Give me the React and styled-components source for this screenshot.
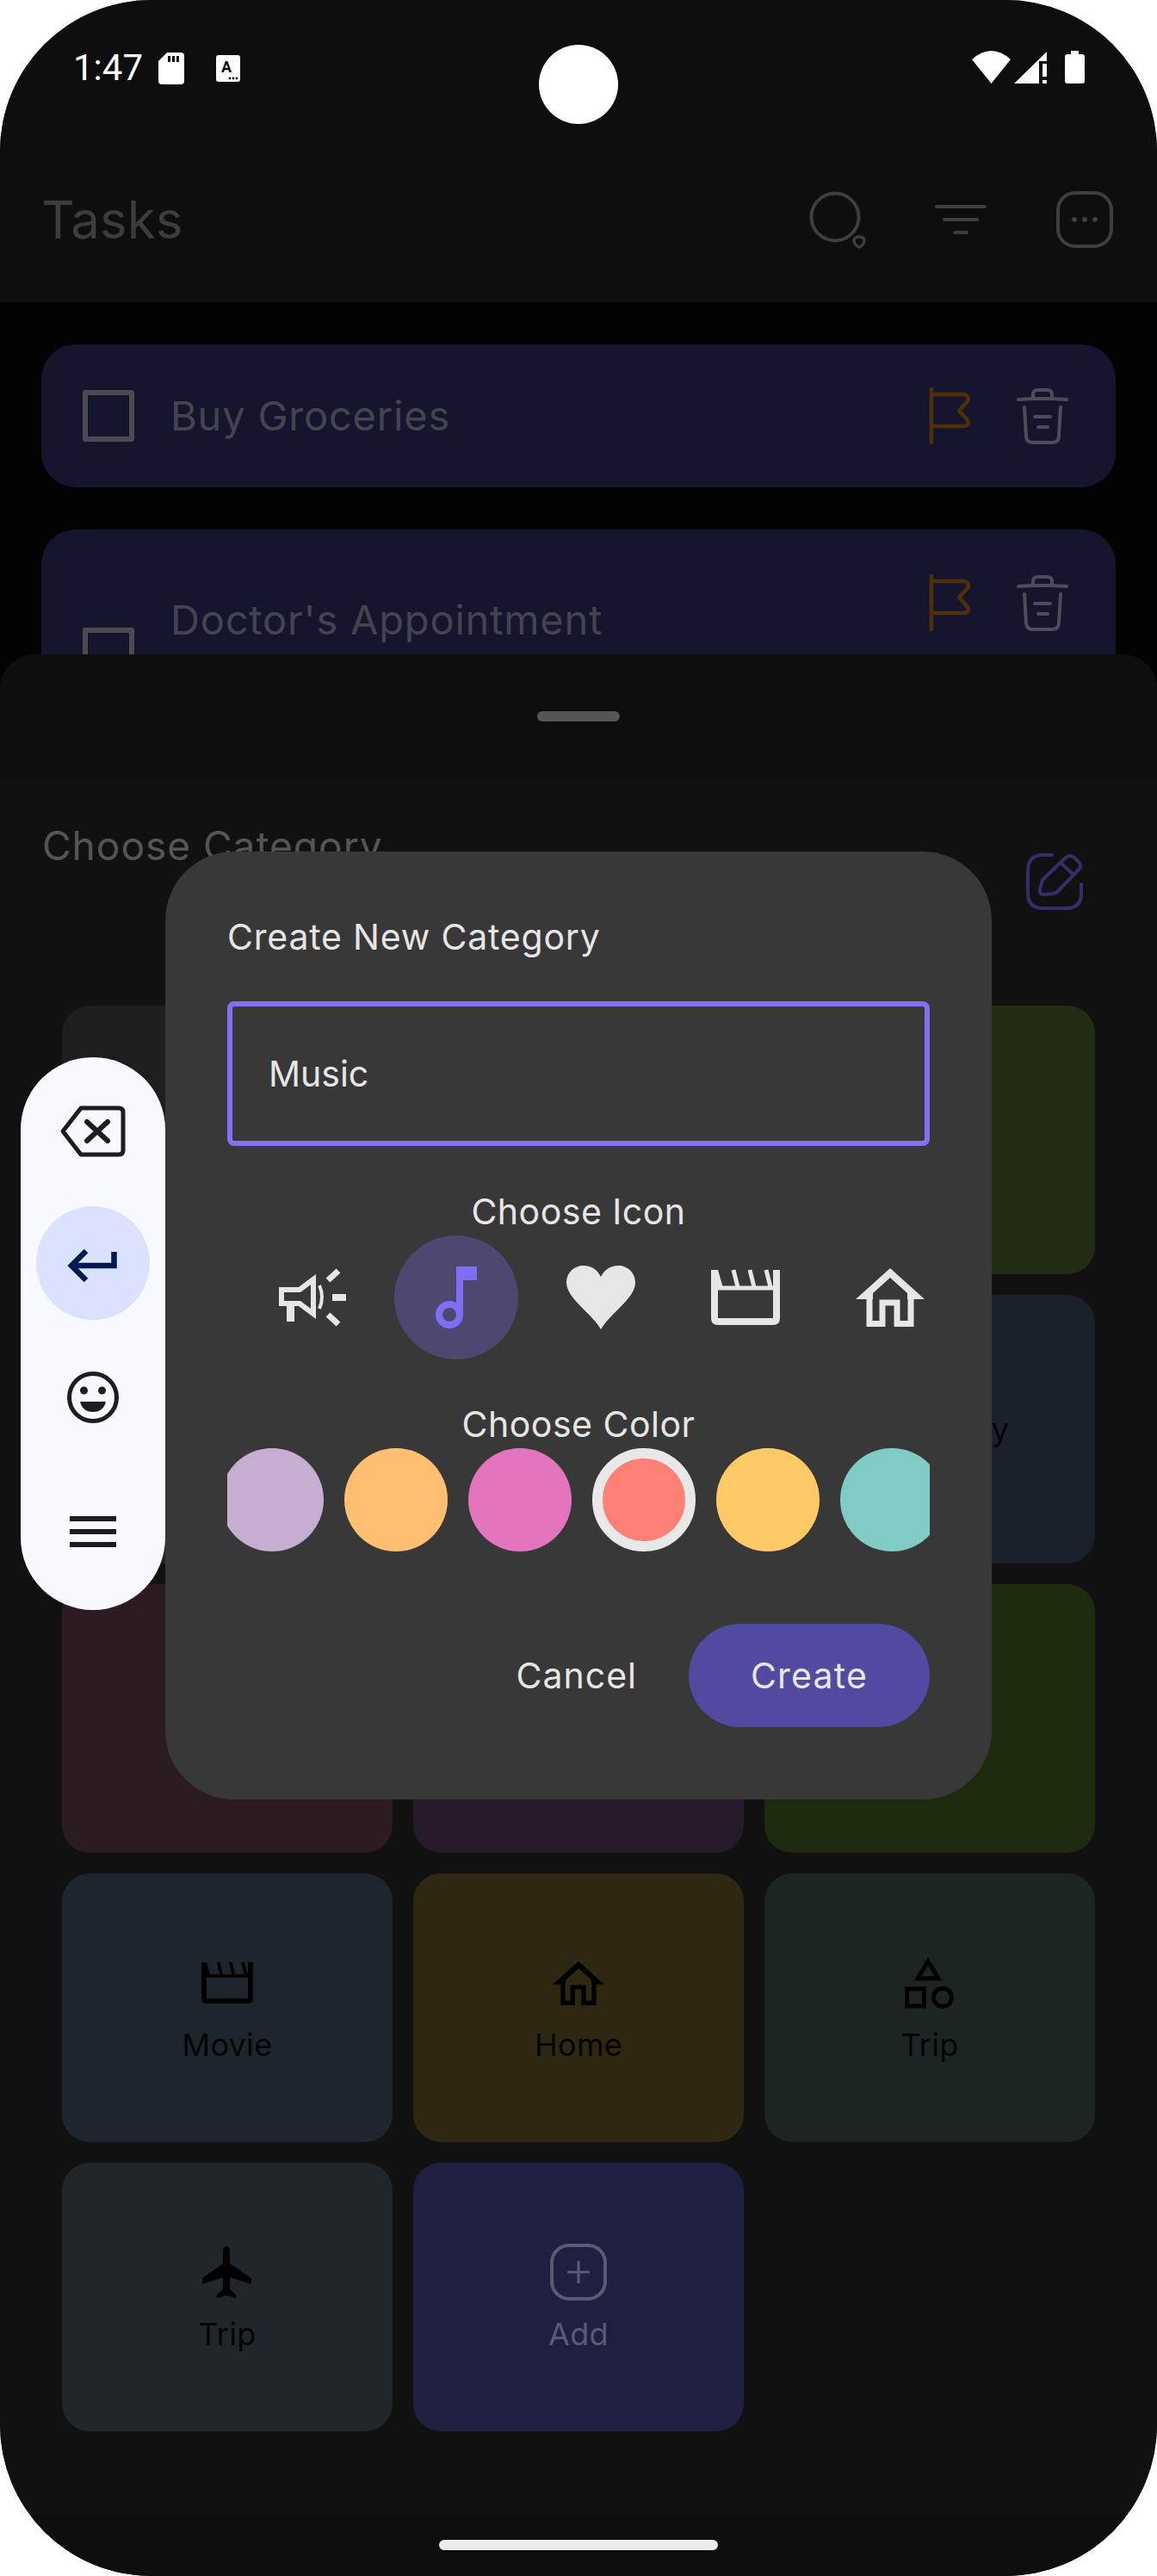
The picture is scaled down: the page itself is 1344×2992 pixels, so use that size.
import styled, { createGlobalStyle } from 'styled-components';

const GlobalStyle = createGlobalStyle`
    html, body {
        margin: 0;
        padding: 0;
        background: #fff;
    }
    * {
        box-sizing: border-box;
    }
`;

const Phone = styled.div`
    position: relative;
    width: 1344px;
    height: 2992px;
    overflow: hidden;
    border-radius: 176px;
    background: #030303;
    font-family: Inter, "Noto Sans", sans-serif;
`;

const Glyph = styled.svg`
    display: block;
    flex: none;
    overflow: visible;
`;

const Camera = styled.div`
    position: absolute;
    top: 52px;
    left: 626px;
    width: 92px;
    height: 92px;
    border-radius: 50%;
    background: #fff;
`;

const TopBar = styled.header`
    height: 351px;
    background: #0e0e0e;
`;

const StatusBar = styled.div`
    display: flex;
    justify-content: space-between;
    height: 160px;
    padding: 59px 84px 0 85px;
`;

const StatusGroup = styled.div`
    display: flex;
    align-items: flex-start;
    gap: ${(p) => p.$gap}px;
`;

const Clock = styled.span`
    margin-top: -1px;
    width: 79px;
    font-family: Roboto, sans-serif;
    font-size: 42px;
    line-height: 42px;
    color: #fff;
`;

const TitleRow = styled.div`
    display: flex;
    align-items: center;
    height: 66px;
    margin-top: 62px;
    padding: 0 51px 0 48px;
`;

const AppTitle = styled.h1`
    flex: 1;
    margin: 0;
    font-size: 60px;
    font-weight: 400;
    color: #3c3c3c;
`;

const HeaderActions = styled.div`
    display: flex;
    gap: 78px;
`;

const TaskList = styled.div`
    display: flex;
    flex-direction: column;
    gap: 49px;
    padding: 49px 48px 0;
`;

const TaskCard = styled.div`
    display: flex;
    align-items: ${(p) => (p.$tall ? 'flex-start' : 'center')};
    min-height: ${(p) => (p.$tall ? 288 : 166)}px;
    padding: ${(p) => (p.$tall ? '52px' : '0')} 54px 0 48px;
    border-radius: 40px;
    background: #16152e;
`;

const Checkbox = styled.div`
    flex: none;
    width: 60px;
    height: 60px;
    margin-right: 42px;
    border: 6px solid #4a4a50;
    border-radius: 3px;
    align-self: ${(p) => (p.$tall ? 'flex-start' : 'center')};
    margin-top: ${(p) => (p.$tall ? 62 : 0)}px;
`;

const TaskName = styled.span`
    flex: 1;
    margin-top: ${(p) => (p.$tall ? 25 : 0)}px;
    font-size: 47px;
    line-height: 56px;
    letter-spacing: 0.8px;
    color: #44444f;
`;

const TaskActions = styled.div`
    display: flex;
    align-items: center;
    gap: 52px;
`;

const Sheet = styled.section`
    position: absolute;
    top: 760px;
    left: 0;
    right: 0;
    bottom: 0;
    display: flex;
    flex-direction: column;
    overflow: hidden;
    border-radius: 40px 40px 0 0;
    background: #111;
`;

const SheetHandleBar = styled.div`
    display: flex;
    justify-content: center;
    flex: none;
    height: 144px;
    padding-top: 66px;
    background: #0e0e0e;
`;

const SheetHandle = styled.div`
    width: 96px;
    height: 12px;
    border-radius: 6px;
    background: #555;
`;

const SheetBody = styled.div`
    flex: 1;
    padding: 0 72px;
`;

const SheetTitleRow = styled.div`
    display: flex;
    justify-content: space-between;
    height: 264px;
    margin: 0 14px 0 -23px;
`;

const SheetTitle = styled.h2`
    margin: 50px 0 0;
    font-size: 46px;
    line-height: 56px;
    font-weight: 400;
    letter-spacing: 1px;
    color: #555;
`;

const EditSlot = styled.div`
    margin-top: 87px;
`;

const CategoryGrid = styled.div`
    display: grid;
    grid-template-columns: repeat(3, 384px);
    grid-auto-rows: 312px;
    gap: 24px;
`;

const CategoryCard = styled.div`
    display: flex;
    flex-direction: column;
    align-items: center;
    justify-content: center;
    gap: 20px;
    border-radius: 32px;
    background: ${(p) => p.$bg};
`;

const CategoryIcon = styled.div`
    display: flex;
    align-items: center;
    justify-content: center;
    height: 66px;
    color: #000;
`;

const CategoryLabel = styled.span`
    font-size: 36px;
    line-height: 38px;
    letter-spacing: ${(p) => (p.$wide ? 1.6 : 0.3)}px;
    color: ${(p) => p.$color || '#050505'};
`;

const NavBand = styled.div`
    flex: none;
    height: 72px;
    background: #0e0e0e;
`;

const HomeIndicator = styled.div`
    position: absolute;
    left: 510px;
    bottom: 30px;
    width: 324px;
    height: 12px;
    border-radius: 6px;
    background: #ececec;
`;

const Dialog = styled.div`
    position: absolute;
    top: 989px;
    left: 192px;
    display: flex;
    flex-direction: column;
    width: 960px;
    height: 1101px;
    padding: 74px 72px 0;
    border-radius: 80px;
    background: #383838;
    color: #e6e6e6;
`;

const DialogTitle = styled.h3`
    margin: 0;
    font-size: 41px;
    line-height: 50px;
    font-weight: 400;
    letter-spacing: 0.8px;
`;

const NameField = styled.div`
    display: flex;
    align-items: center;
    height: 168px;
    margin-top: 50px;
    padding-left: 42px;
    border: 6px solid #8470f5;
    border-radius: 8px;
    font-size: 41px;
`;

const SectionLabel = styled.div`
    margin-top: ${(p) => p.$top}px;
    font-size: 41px;
    line-height: 50px;
    letter-spacing: 0.5px;
    text-align: center;
`;

const IconStrip = styled.div`
    display: flex;
    gap: 24px;
    margin-top: 3px;
    padding-left: 26px;
    overflow: hidden;
`;

const IconChoice = styled.div`
    display: flex;
    align-items: center;
    justify-content: center;
    flex: none;
    width: 144px;
    height: 144px;
    border-radius: 50%;
    background: ${(p) => (p.$selected ? '#4e4770' : 'transparent')};
    color: #e6e6e6;
`;

const SwatchStrip = styled.div`
    display: flex;
    gap: 24px;
    margin-top: 3px;
    overflow: hidden;
`;

const Swatch = styled.div`
    flex: none;
    width: 120px;
    height: 120px;
    border-radius: 50%;
    background: ${(p) => p.$color};
    border: ${(p) => (p.$selected ? '12px solid #e8e8e8' : 'none')};
    margin-left: ${(p) => (p.$first ? -8 : 0)}px;
`;

const DialogButtons = styled.div`
    display: flex;
    justify-content: flex-end;
    align-items: center;
    gap: 60px;
    margin-top: 84px;
`;

const CancelButton = styled.span`
    font-size: 41px;
    letter-spacing: 1px;
`;

const CreateButton = styled.div`
    display: flex;
    align-items: center;
    justify-content: center;
    width: 280px;
    height: 120px;
    border-radius: 60px;
    background: #514aa0;
    font-size: 41px;
    letter-spacing: 1.2px;
`;

const KeyboardToolbar = styled.div`
    position: absolute;
    top: 1228px;
    left: 24px;
    display: flex;
    flex-direction: column;
    align-items: center;
    width: 168px;
    height: 642px;
    padding-top: 8px;
    border-radius: 84px;
    background: #f8f8ff;
`;

const ToolbarKey = styled.div`
    display: flex;
    align-items: center;
    justify-content: center;
    flex: none;
    width: 132px;
    height: ${(p) => (p.$active ? 132 : 156)}px;
    margin: ${(p) => (p.$active ? '9px 0 12px' : '0')};
    border-radius: 50%;
    background: ${(p) => (p.$active ? '#dbe2ff' : 'transparent')};
`;

const SdIcon = () => (
    <Glyph width="30" height="37" viewBox="0 0 30 37" style={{ marginTop: 2 }}>
        <path d="M10 0H26Q30 0 30 4V33Q30 37 26 37H4Q0 37 0 33V10Z" fill="#fff" />
        <path d="M11 4h3v7h-3zM16 4h3v7h-3zM21 4h3v7h-3z" fill="#0e0e0e" />
    </Glyph>
);

const KeyboardBadge = () => (
    <Glyph width="28" height="31" viewBox="0 0 28 31" style={{ marginTop: 5, marginLeft: 17 }}>
        <rect width="28" height="31" rx="3" fill="#fff" />
        <text x="12" y="20" fontSize="18" fontWeight="700" textAnchor="middle" fontFamily="Roboto, sans-serif" fill="#0e0e0e">A</text>
        <circle cx="16" cy="27" r="1.4" fill="#0e0e0e" />
        <circle cx="20" cy="27" r="1.4" fill="#0e0e0e" />
        <circle cx="24" cy="27" r="1.4" fill="#0e0e0e" />
    </Glyph>
);

const WifiIcon = () => (
    <Glyph width="45" height="38" viewBox="0 0 45 38">
        <path d="M0 10Q22.500 -10 45 10L22.500 38Z" fill="#fff" />
    </Glyph>
);

const SignalIcon = () => (
    <Glyph width="38" height="37" viewBox="0 0 38 37" style={{ marginTop: 1 }}>
        <path d="M38 0V11H29V37H0Z" fill="#fff" />
        <path d="M33 14h5v15h-5zM33 33h5v4h-5z" fill="#fff" />
    </Glyph>
);

const BatteryIcon = () => (
    <Glyph width="23" height="38" viewBox="0 0 23 38" style={{ marginLeft: 17 }}>
        <path d="M7 0H16V4H20Q23 4 23 7V35Q23 38 20 38H3Q0 38 0 35V7Q0 4 3 4H7Z" fill="#fff" />
    </Glyph>
);

const SearchIcon = () => (
    <Glyph width="66" height="66" viewBox="0 0 66 66" fill="none" stroke="#3e3e3e" strokeWidth="4">
        <circle cx="31" cy="30" r="27.500" />
        <path d="M59 53Q65 53 65 58Q64 63 59 65Q54 63 53 58Q53 53 59 53Z" strokeWidth="3.500" />
    </Glyph>
);

const FilterIcon = () => (
    <Glyph width="66" height="66" viewBox="0 0 66 66" fill="none" stroke="#3e3e3e" strokeWidth="4" strokeLinecap="round">
        <path d="M5 18H61M14 33H52M26 48H40" />
    </Glyph>
);

const MoreIcon = () => (
    <Glyph width="66" height="66" viewBox="0 0 66 66" fill="none" stroke="#3e3e3e" strokeWidth="4">
        <rect x="2" y="2" width="62" height="62" rx="20" />
        <circle cx="21" cy="33" r="3" fill="#3e3e3e" stroke="none" />
        <circle cx="33" cy="33" r="3" fill="#3e3e3e" stroke="none" />
        <circle cx="45" cy="33" r="3" fill="#3e3e3e" stroke="none" />
    </Glyph>
);

const FlagIcon = () => (
    <Glyph width="48" height="66" viewBox="0 0 48 66" fill="none" stroke="#4f2f0a" strokeWidth="4.500" strokeLinecap="round" strokeLinejoin="round">
        <path d="M2 2V64" />
        <path d="M2 8H38C44 8 46 12 44 16L34 27L44 38C46 42 44 45 39 45H2" />
    </Glyph>
);

const TrashIcon = () => (
    <Glyph width="62" height="66" viewBox="0 0 62 66" fill="none" stroke="#4d4c58" strokeWidth="4" strokeLinecap="round">
        <path d="M3 14Q31 12 59 14" />
        <path d="M20 13V8Q20 3 26 3H36Q42 3 42 8V13" />
        <path d="M10 23L12 56Q12 64 20 64H42Q50 64 50 56L52 23" />
        <path d="M22 34H40M26 46H37" />
    </Glyph>
);

const EditIcon = () => (
    <Glyph width="66" height="66" viewBox="0 0 66 66" fill="none" stroke="#372d6b" strokeWidth="4" strokeLinecap="round" strokeLinejoin="round">
        <path d="M30 2H20Q2 2 2 20V46Q2 64 20 64H46Q64 64 64 46V36" />
        <path d="M19 31L46 5Q51 1 56 5L61 10Q65 15 61 19L37 44Q35 46 31 47L21 48Q15 48 16 42Z" />
        <path d="M41 12L54 24" />
    </Glyph>
);

const MegaphoneIcon = () => (
    <Glyph width="80" height="64" viewBox="0 0 80 64" fill="none" stroke="currentColor">
        <path d="M42 11L26 23H5V39H26L42 51Z" strokeWidth="6" />
        <path d="M11 42H20V60H11Z" fill="currentColor" stroke="none" />
        <path d="M49 18Q55 31 49 45" strokeWidth="4" />
        <path d="M64 28H80V36H64Z" fill="currentColor" stroke="none" />
        <path d="M59 12L71 1M59 52L71 63" strokeWidth="7" />
    </Glyph>
);

const MusicIcon = () => (
    <Glyph width="48" height="72" viewBox="0 0 48 72" fill="#806ef2">
        <path d="M24 0H48V16H32V56H24Z" />
        <circle cx="16" cy="56" r="12" fill="none" stroke="#806ef2" strokeWidth="8" />
    </Glyph>
);

const HeartIcon = () => (
    <Glyph width="80" height="74" viewBox="0 0 80 74" fill="currentColor">
        <path d="M40 74C30 56 0 38 0 20C0 8 9 0 20 0C29 0 36 5 40 13C44 5 51 0 60 0C71 0 80 8 80 20C80 38 50 56 40 74Z" />
    </Glyph>
);

const ClapperIcon = ({ width = 80, height = 64 }) => (
    <Glyph width={width} height={height} viewBox="0 0 80 64" fill="none" stroke="currentColor">
        <path d="M4 4V56Q4 60 8 60H72Q76 60 76 56V0" strokeWidth="8" />
        <path d="M8 21H76" strokeWidth="5" />
        <path d="M26 0L31 20M45 0L50 20M64 0L69 20" strokeWidth="5" />
        <path d="M0 0H8L14 21H0Z" fill="currentColor" stroke="none" />
    </Glyph>
);

const HouseIcon = ({ width = 80, height = 68 }) => (
    <Glyph width={width} height={height} viewBox="0 0 80 68" fill="none" stroke="currentColor">
        <path fillRule="evenodd" d="M40 0L80 36H0ZM40 11L20 29V36H60V29Z" fill="currentColor" stroke="none" />
        <path d="M16 34V64.500H31V40H48V64.500H64V34" strokeWidth="7" />
    </Glyph>
);

const ShapesIcon = () => (
    <Glyph width="58" height="60" viewBox="0 0 58 60" fill="none" stroke="currentColor" strokeWidth="5">
        <path d="M27 5L39 25H15Z" />
        <rect x="2.500" y="37" width="20" height="20" />
        <circle cx="44" cy="47" r="10.500" />
    </Glyph>
);

const PlaneIcon = () => (
    <Glyph width="58" height="60" viewBox="0 0 58 60" fill="currentColor">
        <path d="M28 0Q32 0 32 6V20L57 37V44L32 36V50L39 56V60L28 57L17 60V56L24 50V36L0 44V37L24 20V6Q24 0 28 0Z" />
    </Glyph>
);

const AddIcon = () => (
    <Glyph width="66" height="66" viewBox="0 0 66 66" fill="none" stroke="#5b5a75" strokeWidth="4">
        <rect x="2" y="2" width="62" height="62" rx="20" />
        <path d="M33 20V46M20 33H46" strokeWidth="3" />
    </Glyph>
);

const BackspaceIcon = () => (
    <Glyph width="76" height="60" viewBox="0 0 76 60" fill="none" stroke="#1c1c22" strokeWidth="5" strokeLinecap="round" strokeLinejoin="round">
        <path d="M24 3H68Q73 3 73 8V52Q73 57 68 57H24L3 30Z" />
        <path d="M31 19L55 41M55 19L31 41" strokeWidth="6" />
    </Glyph>
);

const EnterIcon = () => (
    <Glyph width="58" height="40" viewBox="0 0 58 40" fill="none" stroke="#001a52" strokeWidth="6.500">
        <path d="M53.500 7V23H6" />
        <path d="M21 6L4 23L21 40" />
    </Glyph>
);

const SmileIcon = () => (
    <Glyph width="60" height="60" viewBox="0 0 60 60" fill="#1c1c22">
        <circle cx="30" cy="30" r="27.500" fill="none" stroke="#1c1c22" strokeWidth="5" />
        <circle cx="19.500" cy="22" r="4.500" />
        <circle cx="40.500" cy="22" r="4.500" />
        <path d="M15 35H45Q42 47 30 47Q18 47 15 35Z" />
    </Glyph>
);

const MenuIcon = () => (
    <Glyph width="54" height="36" viewBox="0 0 54 36" fill="#1c1c22">
        <path d="M0 0H54V6H0ZM0 15H54V21H0ZM0 30H54V36H0Z" />
    </Glyph>
);

const categories = [
    { bg: '#1e1e1e' },
    { bg: '#1e1e1e' },
    { bg: '#222c14' },
    { bg: '#16282a' },
    { bg: '#1a202c' },
    { bg: '#1a202c', label: 'University', wide: true },
    { bg: '#2c1b22' },
    { bg: '#261b2b' },
    { bg: '#1e2a0e' },
    { bg: '#1c262c', label: 'Movie', icon: <ClapperIcon width={60} height={48} /> },
    { bg: '#2e2810', label: 'Home', icon: <HouseIcon width={60} height={51} /> },
    { bg: '#1c2524', label: 'Trip', icon: <ShapesIcon /> },
    { bg: '#20262a', label: 'Trip', icon: <PlaneIcon /> },
    { bg: '#1f1f42', label: 'Add', icon: <AddIcon />, color: '#5b5a75' },
];

const swatches = ['#c6aed3', '#ffbe70', '#e375bf', '#ff8076', '#ffc966', '#80ccc4'];

function TaskRow({ name, tall }) {
    return (
        <TaskCard $tall={tall}>
            <Checkbox $tall={tall} />
            <TaskName $tall={tall}>{name}</TaskName>
            <TaskActions>
                <FlagIcon />
                <TrashIcon />
            </TaskActions>
        </TaskCard>
    );
}

export default function App() {
    return (
        <>
            <GlobalStyle />
            <Phone>
                <TopBar>
                    <StatusBar>
                        <StatusGroup $gap={20}>
                            <Clock>1:47</Clock>
                            <SdIcon />
                            <KeyboardBadge />
                        </StatusGroup>
                        <StatusGroup $gap={4}>
                            <WifiIcon />
                            <SignalIcon />
                            <BatteryIcon />
                        </StatusGroup>
                    </StatusBar>
                    <TitleRow>
                        <AppTitle>Tasks</AppTitle>
                        <HeaderActions>
                            <SearchIcon />
                            <FilterIcon />
                            <MoreIcon />
                        </HeaderActions>
                    </TitleRow>
                </TopBar>
                <TaskList>
                    <TaskRow name="Buy Groceries" />
                    <TaskRow name="Doctor's Appointment" tall />
                </TaskList>
                <Camera />
                <Sheet>
                    <SheetHandleBar>
                        <SheetHandle />
                    </SheetHandleBar>
                    <SheetBody>
                        <SheetTitleRow>
                            <SheetTitle>Choose Category</SheetTitle>
                            <EditSlot>
                                <EditIcon />
                            </EditSlot>
                        </SheetTitleRow>
                        <CategoryGrid>
                            {categories.map((c, i) => (
                                <CategoryCard key={i} $bg={c.bg}>
                                    {c.icon && <CategoryIcon>{c.icon}</CategoryIcon>}
                                    {c.label && <CategoryLabel $color={c.color} $wide={c.wide}>{c.label}</CategoryLabel>}
                                </CategoryCard>
                            ))}
                        </CategoryGrid>
                    </SheetBody>
                    <NavBand />
                </Sheet>
                <HomeIndicator />
                <Dialog>
                    <DialogTitle>Create New Category</DialogTitle>
                    <NameField>Music</NameField>
                    <SectionLabel $top={51}>Choose Icon</SectionLabel>
                    <IconStrip>
                        <IconChoice><MegaphoneIcon /></IconChoice>
                        <IconChoice $selected><MusicIcon /></IconChoice>
                        <IconChoice><HeartIcon /></IconChoice>
                        <IconChoice><ClapperIcon /></IconChoice>
                        <IconChoice><HouseIcon /></IconChoice>
                    </IconStrip>
                    <SectionLabel $top={50}>Choose Color</SectionLabel>
                    <SwatchStrip>
                        {swatches.map((color, i) => (
                            <Swatch key={color} $color={color} $first={i === 0} $selected={i === 3} />
                        ))}
                    </SwatchStrip>
                    <DialogButtons>
                        <CancelButton>Cancel</CancelButton>
                        <CreateButton>Create</CreateButton>
                    </DialogButtons>
                </Dialog>
                <KeyboardToolbar>
                    <ToolbarKey><BackspaceIcon /></ToolbarKey>
                    <ToolbarKey $active><EnterIcon /></ToolbarKey>
                    <ToolbarKey><SmileIcon /></ToolbarKey>
                    <ToolbarKey><MenuIcon /></ToolbarKey>
                </KeyboardToolbar>
            </Phone>
        </>
    );
}
